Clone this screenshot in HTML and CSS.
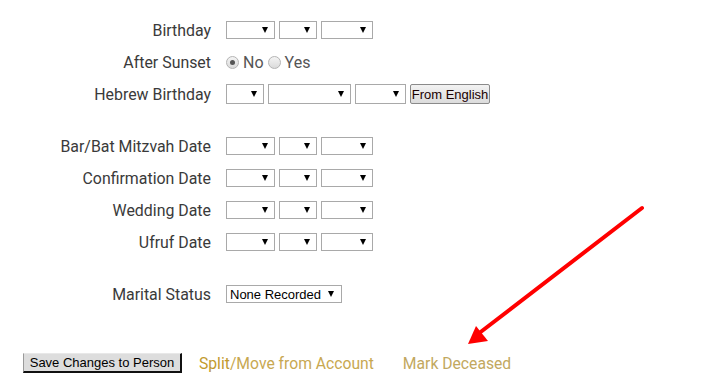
FILE: index.html
```html
<!DOCTYPE html>
<html>
<head>
<meta charset="utf-8">
<link rel="stylesheet" href="styles.css">
</head>
<body>
<div class="page">
  <div class="form">
    <div class="label">Birthday</div>
    <div class="ctrl"><span class="sel w49"></span><span class="sel w38"></span><span class="sel w52"></span></div>

    <div class="label">After Sunset</div>
    <div class="ctrl radios">
      <span class="radio checked"></span><span class="rtext">No</span>
      <span class="radio"></span><span class="rtext">Yes</span>
    </div>

    <div class="label">Hebrew Birthday</div>
    <div class="ctrl"><span class="sel tall w38"></span><span class="sel tall w83"></span><span class="sel tall w51"></span><span class="btn-small">From English</span></div>

    <div class="spacer"></div>

    <div class="label">Bar/Bat Mitzvah Date</div>
    <div class="ctrl"><span class="sel w49"></span><span class="sel w38"></span><span class="sel w52"></span></div>

    <div class="label">Confirmation Date</div>
    <div class="ctrl"><span class="sel w49"></span><span class="sel w38"></span><span class="sel w52"></span></div>

    <div class="label">Wedding Date</div>
    <div class="ctrl"><span class="sel w49"></span><span class="sel w38"></span><span class="sel w52"></span></div>

    <div class="label">Ufruf Date</div>
    <div class="ctrl"><span class="sel w49"></span><span class="sel w38"></span><span class="sel w52"></span></div>

    <div class="spacer"></div>

    <div class="label">Marital Status</div>
    <div class="ctrl"><span class="sel text-sel w116">None Recorded</span></div>
  </div>

  <div class="actions">
    <span class="btn-save">Save Changes to Person</span>
    <span class="link"><span class="split">Split</span>/Move from Account</span>
    <span class="link deceased">Mark Deceased</span>
  </div>

  <svg class="arrow" width="726" height="387" viewBox="0 0 726 387">
    <line x1="642" y1="208" x2="478" y2="334" stroke="#ff0000" stroke-width="4" stroke-linecap="round"/>
    <polygon points="468,344 476,326 488,341" fill="#ff0000"/>
  </svg>
</div>
</body>
</html>
```

FILE: styles.css
```css
html, body {
  margin: 0;
  padding: 0;
  background: #ffffff;
}

.page {
  position: relative;
  width: 726px;
  height: 387px;
  overflow: hidden;
  font-family: Roboto, "Liberation Sans", sans-serif;
  font-size: 16px;
  color: #333333;
}

.form {
  display: grid;
  grid-template-columns: 211px auto;
  column-gap: 15px;
  padding-top: 14px;
}

.label {
  height: 32px;
  display: flex;
  align-items: center;
  justify-content: flex-end;
  white-space: nowrap;
  color: #3a3a3a;
  font-size: 15.9px;
}

.ctrl {
  height: 32px;
  display: flex;
  align-items: center;
  gap: 4px;
}

.spacer {
  grid-column: 1 / 3;
  height: 20px;
}

.sel {
  box-sizing: border-box;
  height: 18px;
  border: 1px solid #a9a9a9;
  background: #ffffff;
  display: inline-flex;
  align-items: center;
  justify-content: flex-end;
  padding-right: 6px;
}

.sel::after {
  content: "";
  width: 0;
  height: 0;
  border-left: 3.5px solid transparent;
  border-right: 3.5px solid transparent;
  border-top: 6px solid #000000;
}

.sel.tall {
  height: 20px;
}

.w38 { width: 38px; }
.w49 { width: 49px; }
.w51 { width: 51px; }
.w52 { width: 52px; }
.w83 { width: 83px; }
.w116 { width: 116px; }

.text-sel {
  justify-content: space-between;
  padding-left: 3px;
  padding-right: 7px;
  font-family: "Liberation Sans", Arial, sans-serif;
  font-size: 13px;
  color: #000000;
}

.btn-small {
  box-sizing: border-box;
  height: 20px;
  width: 80px;
  display: inline-flex;
  align-items: center;
  justify-content: center;
  border: 1px solid #8a8a8a;
  border-radius: 2px;
  background: linear-gradient(#f2f2f2, #dcdcdc);
  font-family: "Liberation Sans", Arial, sans-serif;
  font-size: 13px;
  color: #1a0000;
}

.radios {
  gap: 0;
}

.radio {
  box-sizing: border-box;
  width: 13px;
  height: 13px;
  border-radius: 50%;
  border: 1px solid #b4b4b4;
  background: linear-gradient(#f4f4f4, #dadada);
  display: inline-flex;
  align-items: center;
  justify-content: center;
  margin-right: 4px;
}

.radio.checked::after {
  content: "";
  width: 5px;
  height: 5px;
  border-radius: 50%;
  background: #555555;
}

.rtext {
  color: #555555;
  margin-right: 4px;
}

.actions {
  display: flex;
  align-items: center;
  padding-left: 23px;
  margin-top: 43px;
  height: 20px;
}

.btn-save {
  box-sizing: border-box;
  height: 20px;
  width: 159px;
  display: inline-flex;
  align-items: center;
  justify-content: center;
  background: #dddddd;
  border-top: 1px solid #e8e8e8;
  border-left: 1px solid #9a9a9a;
  border-right: 2px solid #111111;
  border-bottom: 2px solid #111111;
  font-family: "Liberation Sans", Arial, sans-serif;
  font-size: 13px;
  color: #000000;
  margin-right: 17px;
}

.link {
  color: #c8a851;
  margin-right: 29px;
  white-space: nowrap;
  font-size: 15.7px;
}

.split {
  color: #c19a2e;
}

.deceased {
  color: #c2a860;
}

.arrow {
  position: absolute;
  left: 0;
  top: 0;
  pointer-events: none;
}
```
